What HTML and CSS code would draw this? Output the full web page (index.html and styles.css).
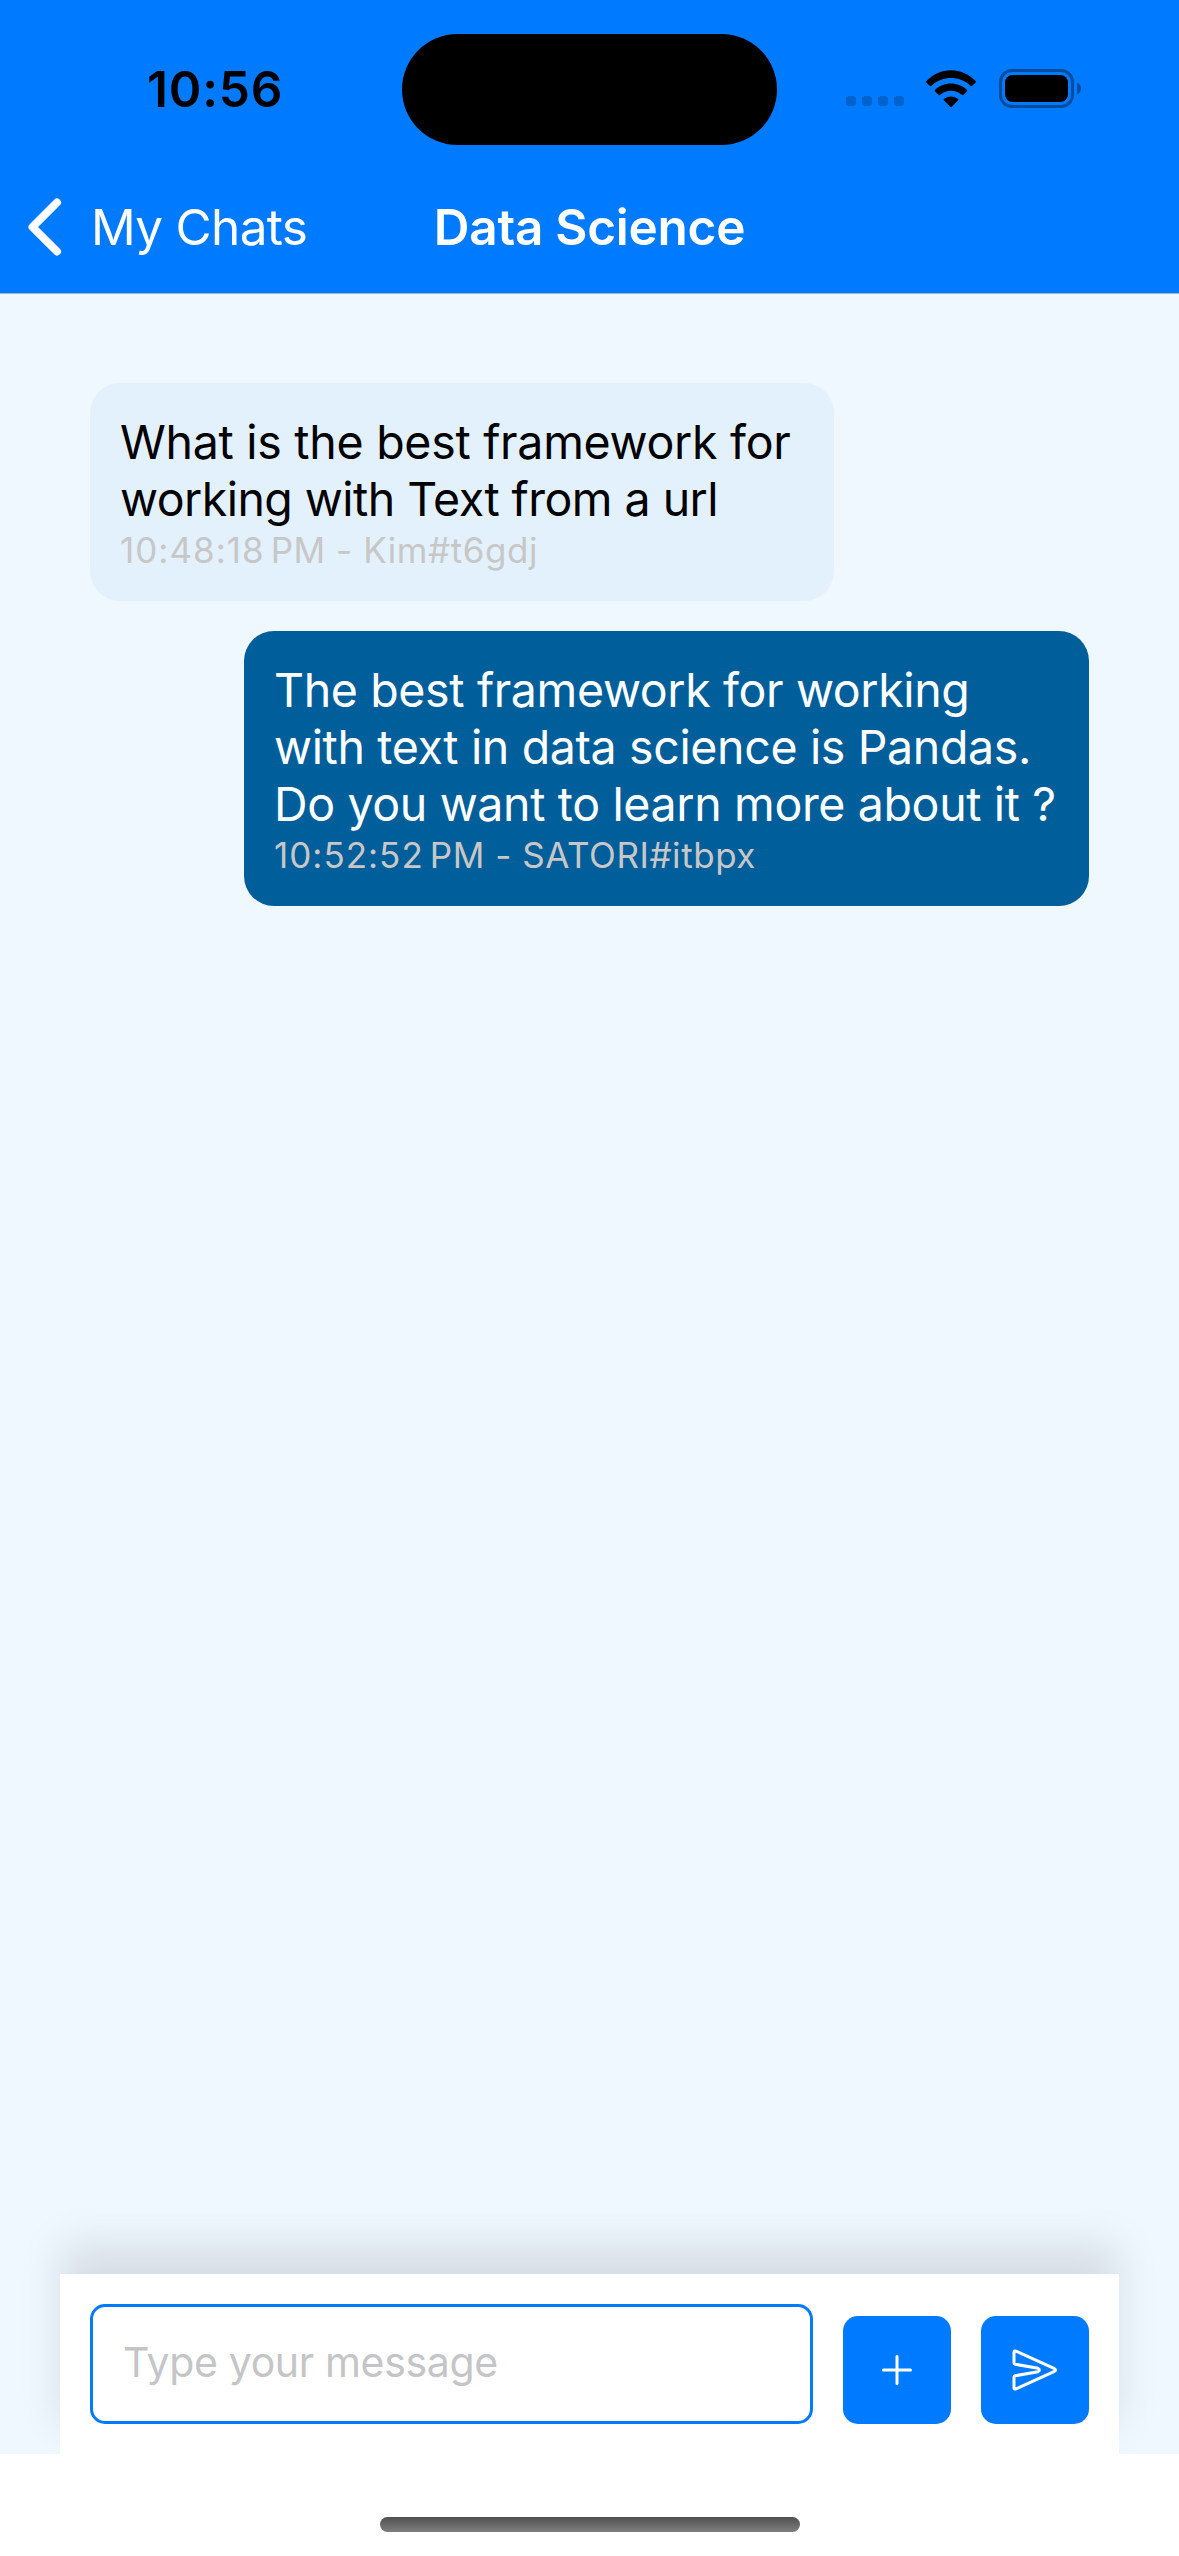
FILE: index.html
```html
<!DOCTYPE html>
<html lang="en">
<head>
<meta charset="utf-8">
<title>Data Science</title>
<link rel="stylesheet" href="styles.css">
</head>
<body>
<div class="screen">
  <header class="header">
    <div class="status">
      <div class="status-left"><span class="time">10:56</span></div>
      <div class="island"></div>
      <div class="status-right">
        <svg class="dots" width="58" height="10" viewBox="0 0 58 10"><rect width="10" height="10" rx="3"/><rect x="16" width="10" height="10" rx="3"/><rect x="32" width="10" height="10" rx="3"/><rect x="48" width="10" height="10" rx="3"/></svg>
        <svg class="wifi" width="52" height="38" viewBox="0 0 52 38">
          <path d="M1.2 11.2C15-3.4 37-3.4 50.800 11.200Q51.200 11.800 50.700 12.400L47 16Q46.400 16.400 45.800 15.900C34.500 5.400 17.500 5.400 6.200 15.900Q5.600 16.400 5 16L1.300 12.400Q.8 11.800 1.200 11.200Z"/>
          <path d="M9.900 20.100C18.500 11.300 33.500 11.300 42.100 20.100Q42.600 20.700 42.100 21.300L38.300 25Q37.700 25.500 37.100 25C30.800 19.300 21.200 19.300 14.900 25Q14.300 25.500 13.700 25L9.900 21.300Q9.400 20.700 9.900 20.100Z"/>
          <path d="M18.900 29C22.600 25.600 29.400 25.600 33.100 29Q33.700 29.600 33.100 30.200L26.700 36.800Q26 37.500 25.300 36.800L18.900 30.200Q18.300 29.600 18.900 29Z"/>
        </svg>
        <svg class="battery" width="83" height="39" viewBox="0 0 83 39"><rect class="battery-case" x="1.500" y="1.500" width="72" height="36" rx="11.500"/><rect x="6" y="6" width="63" height="27" rx="7.500"/><path class="battery-tip" d="M78 13.500C80.500 14.500 82 16.800 82 19.500S80.500 24.500 78 25.500Z"/></svg>
      </div>
    </div>
    <nav class="nav">
      <a class="back">
        <svg width="34" height="58" viewBox="0 0 34 58"><path d="M29 4.500L4.500 29L29 53.500"/></svg>
        <span class="back-label">My Chats</span>
      </a>
      <h1 class="title">Data Science</h1>
      <span></span>
    </nav>
  </header>

  <main class="messages">
    <article class="bubble bubble-in">
      <p class="text">What is the best framework for<br><span class="snug">working with Text from a url</span></p>
      <p class="meta"><span class="clock">10:48:18</span>PM - Kim#t6gdj</p>
    </article>
    <article class="bubble bubble-out">
      <p class="text">The best framework for working<br>with text in data science is Pandas.<br>Do you want to learn more about it ?</p>
      <p class="meta"><span class="clock">10:52:52</span>PM - SATORI#itbpx</p>
    </article>
  </main>

  <form class="composer">
    <input class="field" type="text" placeholder="Type your message">
    <button class="action" type="button" aria-label="Attach"><svg width="48" height="48" viewBox="0 0 48 48"><path d="M24 10.500V37.500M10.500 24H37.500"/></svg></button>
    <button class="action" type="button" aria-label="Send"><svg width="48" height="48" viewBox="0 0 48 48"><path d="M3 6.500Q3 4.300 5 5.200L43.500 22.700Q45.700 24 43.500 25.300L5 42.800Q3 43.700 3 41.500V31Q3 30 4.100 29.800L27 25.700Q29.800 24 27 22.300L4.100 18.200Q3 18 3 17Z"/></svg></button>
  </form>

  <footer class="footer"><div class="home"></div></footer>
</div>
</body>
</html>
```
FILE: styles.css
```css
* { box-sizing: border-box; }
body { margin: 0; font-family: Inter, "Liberation Sans", sans-serif; background: #fff; }
h1, p { margin: 0; font-weight: 400; }
svg { display: block; flex: none; }

.screen { width: 1179px; height: 2556px; display: flex; flex-direction: column; background: #eff7ff; overflow: hidden; }

.header { background: #007aff; border-bottom: 1px solid #a3b4c8; }
.status { height: 177px; display: grid; grid-template-columns: 402px 375px 402px; align-items: center; }
.status-left { padding-left: 147px; }
.time { display: block; font-size: 49.500px; line-height: 60px; font-weight: 600; letter-spacing: .8px; }
.island { height: 111px; margin-top: 1px; border-radius: 56px; background: #000; }
.status-right { display: flex; align-items: center; padding-left: 69px; }
.dots { margin-top: 25px; fill: #0062cc; }
.wifi { margin-left: 21px; }
.battery { margin-left: 22px; }
.battery-case { fill: none; stroke: #004c9f; stroke-width: 3; }
.battery-tip { fill: #004c9f; }

.nav { height: 116px; padding: 0 28px 16px; display: grid; grid-template-columns: 1fr auto 1fr; align-items: center; color: #fff; }
.back { display: flex; align-items: center; gap: 29px; }
.back svg { fill: none; stroke: #fff; stroke-width: 8; stroke-linecap: round; stroke-linejoin: round; }
.back-label { font-size: 49.500px; line-height: 60px; letter-spacing: -.7px; white-space: nowrap; }
.title { font-size: 49.500px; line-height: 60px; font-weight: 600; letter-spacing: -.25px; }

.messages { flex: 1; padding: 89px 90px 0; display: flex; flex-direction: column; gap: 30px; }
.bubble { padding: 31px 30px 29px; border-radius: 30px; white-space: nowrap; }
.bubble-in { align-self: flex-start; width: 744px; background: #e3f1fd; color: #000; }
.bubble-out { align-self: flex-end; width: 845px; background: #005f9b; color: #fff; }
.text { font-size: 46.500px; line-height: 57.333px; }
.bubble-in .text { letter-spacing: -.28px; }
.bubble-in .snug { letter-spacing: -.54px; }
.bubble-out .text { letter-spacing: -.36px; }
.meta { font-size: 35px; line-height: 43px; color: #c7c7c7; letter-spacing: .55px; }
.clock { margin-right: 6px; letter-spacing: 1px; }

.composer { margin: 0 60px; height: 180px; padding: 30px; display: flex; align-items: flex-end; gap: 30px; background: #fff; box-shadow: 0 -30px 40px rgba(0, 0, 0, .1); }
.field { width: 723px; height: 120px; padding: 0 30px 4px; border: 3px solid #007aff; border-radius: 15px; background: #fff; font-family: inherit; font-size: 41px; letter-spacing: -.35px; outline: none; }
.field::placeholder { color: #c5c5c7; opacity: 1; }
.action { width: 108px; height: 108px; padding: 0; border: 0; border-radius: 15px; background: #007aff; display: grid; place-items: center; }
.action svg { fill: none; stroke: #fff; stroke-width: 3; stroke-linecap: round; stroke-linejoin: round; }

.footer { position: relative; height: 102px; padding: 63px 0 0 380px; background: #fff; }
.home { width: 420px; height: 15px; border-radius: 8px; background: linear-gradient(#505050, #7e7e7e); }
```
